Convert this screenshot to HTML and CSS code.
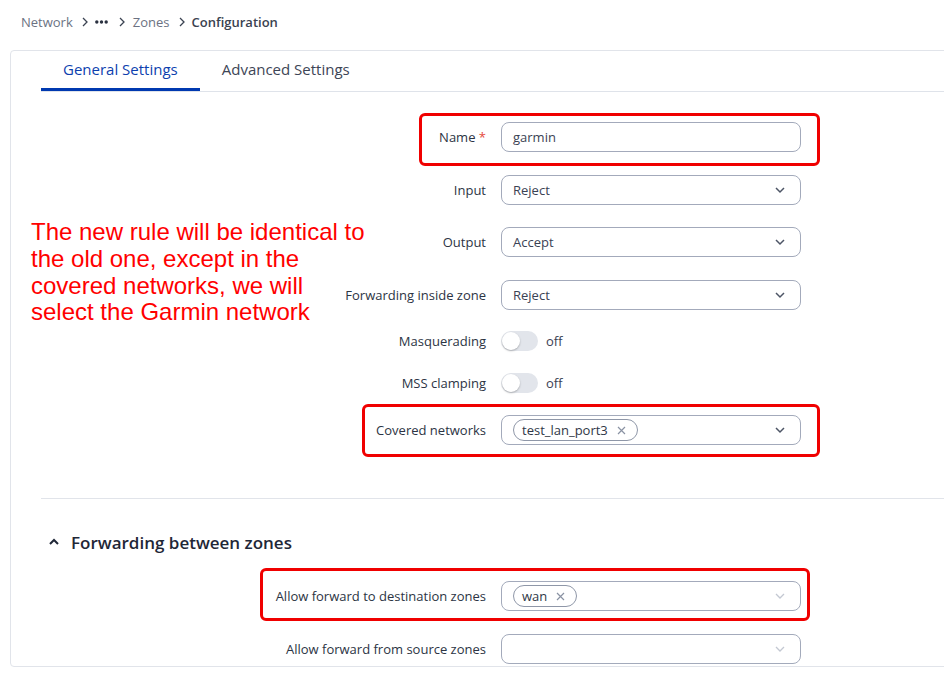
FILE: index.html
```html
<!DOCTYPE html>
<html lang="en">
<head>
<meta charset="utf-8">
<title>Zones Configuration</title>
<link rel="stylesheet" href="styles.css">
</head>
<body>
<div class="page">
  <nav class="breadcrumb">
    <span class="crumb">Network</span>
    <svg class="sep" width="8" height="10" viewBox="0 0 8 10"><polyline points="2,1 6,5 2,9" fill="none" stroke="#3b4352" stroke-width="1.3"/></svg>
    <svg class="dots" width="13" height="6" viewBox="0 0 13 6"><circle cx="1.8" cy="3" r="1.7" fill="#2a3140"/><circle cx="6.5" cy="3" r="1.7" fill="#2a3140"/><circle cx="11.2" cy="3" r="1.7" fill="#2a3140"/></svg>
    <svg class="sep" width="8" height="10" viewBox="0 0 8 10"><polyline points="2,1 6,5 2,9" fill="none" stroke="#3b4352" stroke-width="1.3"/></svg>
    <span class="crumb">Zones</span>
    <svg class="sep" width="8" height="10" viewBox="0 0 8 10"><polyline points="2,1 6,5 2,9" fill="none" stroke="#3b4352" stroke-width="1.3"/></svg>
    <span class="crumb current">Configuration</span>
  </nav>

  <section class="card">
    <div class="tabs">
      <div class="tab active">General Settings</div>
      <div class="tab">Advanced Settings</div>
    </div>

    <div class="form">
      <div class="row">
        <label class="label">Name <span class="req">*</span></label>
        <div class="field input"><span class="value">garmin</span></div>
      </div>
      <div class="row m23">
        <label class="label">Input</label>
        <div class="field select"><span class="value">Reject</span>
          <svg class="chev" width="12" height="8" viewBox="0 0 12 8"><polyline points="2,2 6,6 10,2" fill="none" stroke="#4d5566" stroke-width="1.5"/></svg></div>
      </div>
      <div class="row m22">
        <label class="label">Output</label>
        <div class="field select"><span class="value">Accept</span>
          <svg class="chev" width="12" height="8" viewBox="0 0 12 8"><polyline points="2,2 6,6 10,2" fill="none" stroke="#4d5566" stroke-width="1.5"/></svg></div>
      </div>
      <div class="row m23">
        <label class="label">Forwarding inside zone</label>
        <div class="field select"><span class="value">Reject</span>
          <svg class="chev" width="12" height="8" viewBox="0 0 12 8"><polyline points="2,2 6,6 10,2" fill="none" stroke="#4d5566" stroke-width="1.5"/></svg></div>
      </div>
      <div class="row toggle-row m21">
        <label class="label">Masquerading</label>
        <div class="toggle-wrap"><span class="toggle"><span class="knob"></span></span><span class="state">off</span></div>
      </div>
      <div class="row toggle-row m22">
        <label class="label">MSS clamping</label>
        <div class="toggle-wrap"><span class="toggle"><span class="knob"></span></span><span class="state">off</span></div>
      </div>
      <div class="row m22">
        <label class="label">Covered networks</label>
        <div class="field select"><span class="chip">test_lan_port3<svg class="x" width="9" height="9" viewBox="0 0 9 9"><path d="M1 1L8 8M8 1L1 8" stroke="#8a92a3" stroke-width="1.2"/></svg></span>
          <svg class="chev" width="12" height="8" viewBox="0 0 12 8"><polyline points="2,2 6,6 10,2" fill="none" stroke="#4d5566" stroke-width="1.5"/></svg></div>
      </div>

      <hr class="divider">

      <h2 class="section-title">
        <svg class="up" width="12" height="8" viewBox="0 0 12 8"><polyline points="2,6 6,2 10,6" fill="none" stroke="#1f2737" stroke-width="2"/></svg>
        Forwarding between zones
      </h2>

      <div class="row dest">
        <label class="label">Allow forward to destination zones</label>
        <div class="field select"><span class="chip">wan<svg class="x" width="9" height="9" viewBox="0 0 9 9"><path d="M1 1L8 8M8 1L1 8" stroke="#8a92a3" stroke-width="1.2"/></svg></span>
          <svg class="chev" width="12" height="8" viewBox="0 0 12 8"><polyline points="2,2 6,6 10,2" fill="none" stroke="#c3c8d2" stroke-width="1.3"/></svg></div>
      </div>
      <div class="row m23">
        <label class="label">Allow forward from source zones</label>
        <div class="field select">
          <svg class="chev" width="12" height="8" viewBox="0 0 12 8"><polyline points="2,2 6,6 10,2" fill="none" stroke="#c3c8d2" stroke-width="1.3"/></svg></div>
      </div>
    </div>
  </section>

  <div class="note">
    <span class="note-line">The new rule will be identical to</span>
    <span class="note-line">the old one, except in the</span>
    <span class="note-line">covered networks, we will</span>
    <span class="note-line">select the Garmin network</span>
  </div>
  <div class="mark mark-name"></div>
  <div class="mark mark-covered"></div>
  <div class="mark mark-dest"></div>
</div>
</body>
</html>
```

FILE: styles.css
```css
html, body {
  margin: 0;
  padding: 0;
  background: #ffffff;
  overflow: hidden;
}
body {
  font-family: "Open Sans", "Noto Sans", sans-serif;
  color: #2c3444;
  width: 944px;
  height: 675px;
}
.page {
  position: relative;
  width: 944px;
  height: 675px;
  overflow: hidden;
}
.breadcrumb {
  height: 44px;
  display: flex;
  align-items: center;
  padding-left: 21px;
  font-size: 13px;
}
.crumb { color: #6b7282; }
.crumb.current { color: #3a4250; font-weight: 600; }
.sep { margin: 0 6px 0 8px; }
.dots + .sep { margin: 0 7px 0 10px; }
.crumb + .sep { margin-left: 8px; }

.card {
  margin: 6px 0 0 10px;
  width: 1000px;
  height: 617px;
  box-sizing: border-box;
  border: 1px solid #e1e4ea;
  border-radius: 4px;
  overflow: hidden;
}
.tabs {
  display: flex;
  margin-left: 30px;
  height: 40px;
  border-bottom: 1px solid #dfe3ea;
}
.tab {
  padding: 0 22px;
  font-size: 15px;
  color: #3d4556;
  line-height: 37px;
  height: 37px;
  border-bottom: 3px solid transparent;
}
.tab.active {
  color: #0d3fae;
  border-bottom-color: #0039b0;
}

.form {
  padding-top: 30px;
}
.row {
  display: flex;
  align-items: center;
  height: 30px;
}
.row.toggle-row { height: 20px; }
.m21 { margin-top: 21px; }
.m22 { margin-top: 22px; }
.m23 { margin-top: 23px; }
.row.dest { margin-top: 27px; }
.label {
  width: 475px;
  text-align: right;
  font-size: 13px;
  color: #2c3444;
  padding-right: 15px;
  box-sizing: content-box;
}
.req { color: #e5473b; }
.field {
  width: 300px;
  height: 30px;
  box-sizing: border-box;
  border: 1px solid #a3aabb;
  border-radius: 8px;
  display: flex;
  align-items: center;
  padding-left: 11px;
  position: relative;
  font-size: 13px;
  color: #3a4254;
}
.chev {
  position: absolute;
  right: 14px;
  top: 10px;
}
.chip {
  display: inline-flex;
  align-items: center;
  height: 22px;
  box-sizing: border-box;
  border: 1px solid #8f97a8;
  border-radius: 11px;
  padding: 0 11px 0 8px;
  font-size: 13px;
  color: #2f3747;
}
.chip .x { margin-left: 9px; }
.toggle-wrap {
  display: flex;
  align-items: center;
}
.toggle {
  width: 37px;
  height: 20px;
  border-radius: 10px;
  background: #e2e5eb;
  position: relative;
  display: inline-block;
}
.knob {
  position: absolute;
  left: 1px;
  top: 1px;
  width: 18px;
  height: 18px;
  border-radius: 50%;
  background: #ffffff;
  box-shadow: 0 1px 2px rgba(0,0,0,0.25);
}
.state {
  margin-left: 8px;
  font-size: 13px;
  color: #3a4254;
}
.divider {
  margin: 53px 0 0 30px;
  border: 0;
  border-top: 1px solid #e1e4ea;
  height: 0;
}
.section-title {
  margin: 31px 0 0 37px;
  height: 24px;
  display: flex;
  align-items: center;
  font-size: 17px;
  font-weight: 600;
  color: #1f2737;
}
.section-title .up { margin-right: 11px; }

.note {
  position: absolute;
  left: 31px;
  top: 219px;
  display: flex;
  flex-direction: column;
  align-items: flex-start;
  font-family: "Liberation Sans", Arial, sans-serif;
  font-size: 24px;
  line-height: 26.8px;
  color: #ff0000;
}
.note-line {
  white-space: nowrap;
}
.mark {
  position: absolute;
  border: 3px solid #f00000;
  border-radius: 6px;
  box-sizing: border-box;
}
.mark-name { left: 419px; top: 113px; width: 401px; height: 53px; }
.mark-covered { left: 362px; top: 404px; width: 458px; height: 53px; }
.mark-dest { left: 260px; top: 568px; width: 550px; height: 53px; }
```
